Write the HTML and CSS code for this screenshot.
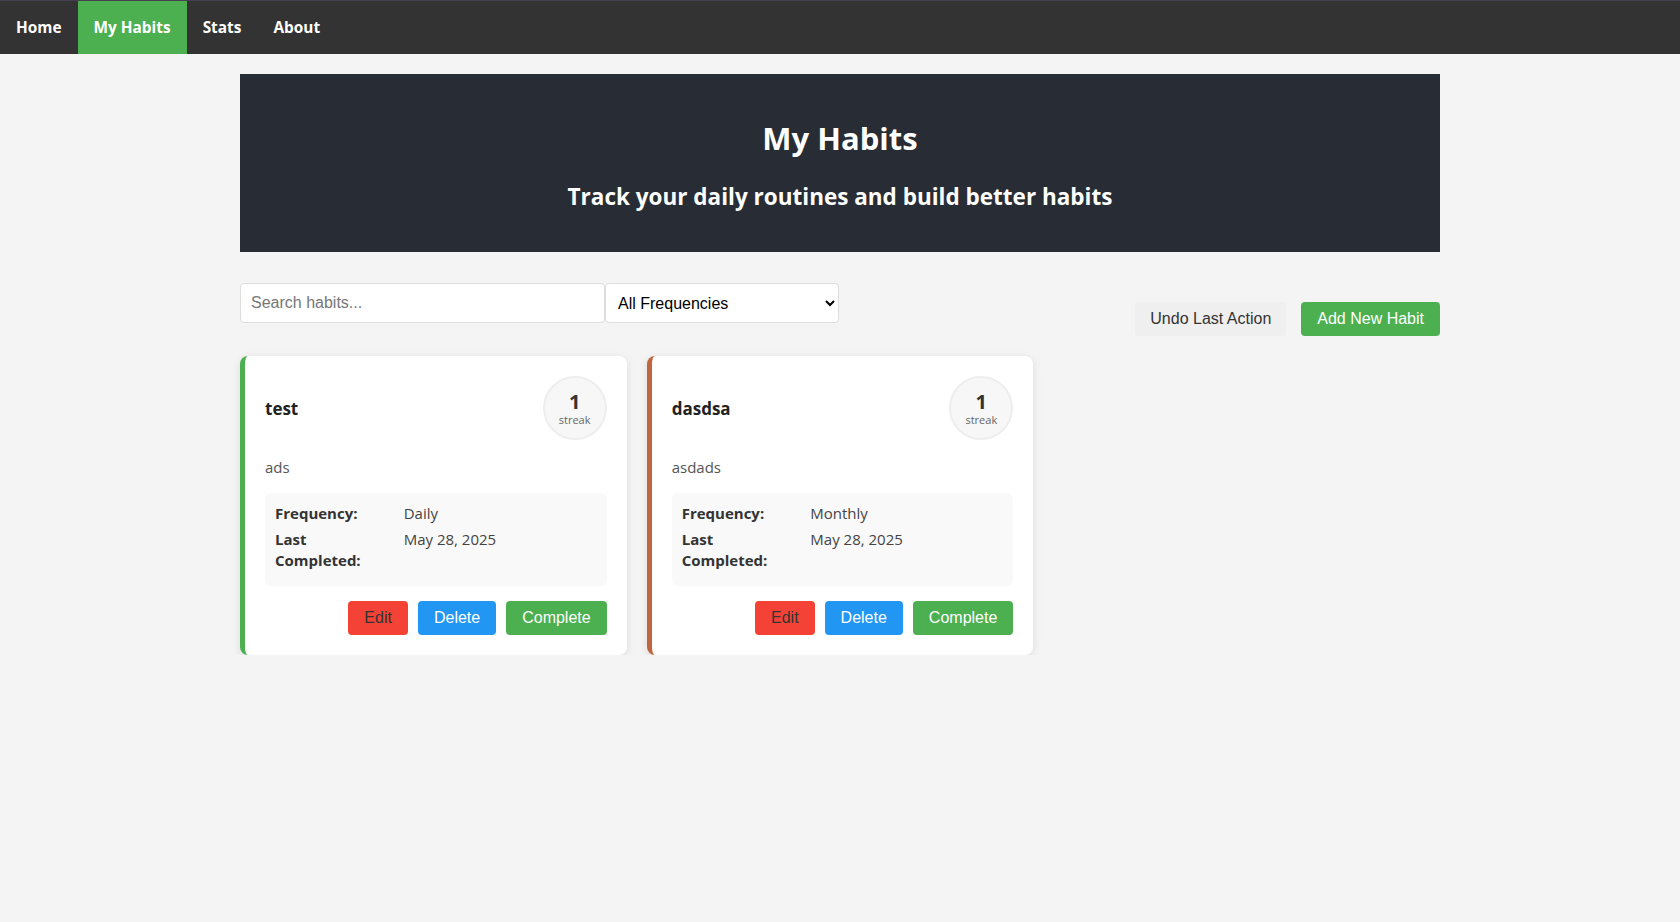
FILE: index.html
```html
<!DOCTYPE html>
<html lang="en">
<head>
<meta charset="utf-8">
<title>My Habits</title>
<link rel="stylesheet" href="styles.css">
</head>
<body>
<nav class="navbar">
  <a class="nav-link" href="#">Home</a>
  <a class="nav-link active" href="#">My Habits</a>
  <a class="nav-link" href="#">Stats</a>
  <a class="nav-link" href="#">About</a>
</nav>
<main class="container">
  <header class="hero">
    <h1 class="hero-title">My Habits</h1>
    <h2 class="hero-subtitle">Track your daily routines and build better habits</h2>
  </header>
  <section class="toolbar">
    <div class="filters">
      <input class="search-input" type="text" placeholder="Search habits...">
      <select class="freq-select">
        <option>All Frequencies</option>
        <option>Daily</option>
        <option>Weekly</option>
        <option>Monthly</option>
      </select>
    </div>
    <div class="actions">
      <button class="btn btn-undo">Undo Last Action</button>
      <button class="btn btn-green">Add New Habit</button>
    </div>
  </section>
  <section class="habit-grid">
    <article class="habit-card card-green">
      <div class="card-head">
        <h3 class="habit-name">test</h3>
        <div class="streak"><span class="streak-num">1</span><span class="streak-label">streak</span></div>
      </div>
      <p class="habit-desc">ads</p>
      <div class="details">
        <div class="detail-row"><span class="detail-label">Frequency:</span><span class="detail-value">Daily</span></div>
        <div class="detail-row"><span class="detail-label">Last<br>Completed:</span><span class="detail-value">May 28, 2025</span></div>
      </div>
      <div class="card-buttons">
        <button class="btn btn-red">Edit</button>
        <button class="btn btn-blue">Delete</button>
        <button class="btn btn-green">Complete</button>
      </div>
    </article>
    <article class="habit-card card-brown">
      <div class="card-head">
        <h3 class="habit-name">dasdsa</h3>
        <div class="streak"><span class="streak-num">1</span><span class="streak-label">streak</span></div>
      </div>
      <p class="habit-desc">asdads</p>
      <div class="details">
        <div class="detail-row"><span class="detail-label">Frequency:</span><span class="detail-value">Monthly</span></div>
        <div class="detail-row"><span class="detail-label">Last<br>Completed:</span><span class="detail-value">May 28, 2025</span></div>
      </div>
      <div class="card-buttons">
        <button class="btn btn-red">Edit</button>
        <button class="btn btn-blue">Delete</button>
        <button class="btn btn-green">Complete</button>
      </div>
    </article>
  </section>
</main>
</body>
</html>
```

FILE: styles.css
```css
* { box-sizing: border-box; }

body {
  margin: 0;
  background: #f4f4f4;
  font-family: "Open Sans", "Noto Sans", sans-serif;
  color: #333;
}

.navbar {
  display: flex;
  background: #333;
  border-top: 1px solid #45404f;
}

.nav-link {
  display: block;
  padding: 16px 16px 15px;
  line-height: 22px;
  font-size: 15.4px;
  font-weight: 700;
  color: #fff;
  text-decoration: none;
}

.nav-link.active { background: #4caf50; }

.container {
  width: 1200px;
  margin: 0 auto;
  padding-top: 20px;
}

.hero {
  background: #282c34;
  color: #fff;
  text-align: center;
  padding: 44px 20px 40px;
  margin-bottom: 31px;
}

.hero-title {
  margin: 0 0 24px;
  font-size: 31px;
  line-height: 40px;
  font-weight: 700;
}

.hero-subtitle {
  margin: 0;
  font-size: 22.5px;
  line-height: 30px;
  font-weight: 700;
}

.toolbar {
  display: flex;
  justify-content: space-between;
  align-items: flex-start;
  margin-bottom: 20px;
}

.filters { display: flex; }

.search-input {
  width: 365px;
  height: 40px;
  padding: 0 10px;
  border: 1px solid #ddd;
  border-radius: 4px;
  font-family: "Liberation Sans", Arial, sans-serif;
  font-size: 16px;
  color: #333;
  background: #fff;
}

.search-input::placeholder { color: #777; }

.freq-select {
  width: 234px;
  height: 40px;
  padding: 0 8px;
  border: 1px solid #ddd;
  border-radius: 4px;
  font-family: "Liberation Sans", Arial, sans-serif;
  font-size: 16px;
  color: #000;
  background: #fff;
}

.actions {
  display: flex;
  gap: 15px;
  padding-top: 19px;
}

.btn {
  border: none;
  border-radius: 4px;
  padding: 8px 16px;
  font-family: "Liberation Sans", Arial, sans-serif;
  font-size: 16px;
  line-height: 18px;
  cursor: pointer;
}

.btn-undo { background: #efefef; color: #333; padding: 8px 15px; }
.btn-green { background: #4caf50; color: #fff; }
.btn-blue { background: #2196f3; color: #fff; }
.btn-red { background: #f44336; color: #333; }

.habit-grid {
  display: grid;
  grid-template-columns: repeat(3, 1fr);
  gap: 20px;
}

.habit-card {
  background: #fff;
  border-radius: 8px;
  border-left: 5px solid #4caf50;
  padding: 20px;
  box-shadow: 0 2px 8px rgba(0, 0, 0, 0.1);
}

.card-brown { border-left-color: #c0663e; }

.card-head {
  display: flex;
  justify-content: space-between;
  align-items: center;
}

.habit-name {
  margin: 0;
  font-size: 17px;
  font-weight: 700;
  color: #222;
}

.streak {
  width: 64px;
  height: 64px;
  border-radius: 50%;
  border: 2px solid #eee;
  background: #f7f7f7;
  display: flex;
  flex-direction: column;
  align-items: center;
  justify-content: center;
}

.streak-num {
  font-size: 20px;
  line-height: 20px;
  font-weight: 700;
  color: #333;
  margin-top: 2px;
}

.streak-label {
  font-size: 11px;
  line-height: 15px;
  color: #666;
}

.habit-desc {
  margin: 16px 0 15px;
  font-size: 15px;
  line-height: 22px;
  color: #555;
}

.details {
  background: #f9f9f9;
  border-radius: 6px;
  padding: 10px 10px;
}

.detail-row {
  display: flex;
  margin-bottom: 5px;
  font-size: 15px;
  line-height: 21px;
}

.detail-label {
  flex: 0 0 40%;
  font-weight: 700;
  color: #333;
}

.detail-value { color: #444; }

.card-buttons {
  display: flex;
  justify-content: flex-end;
  gap: 10px;
  margin-top: 15px;
}
```
